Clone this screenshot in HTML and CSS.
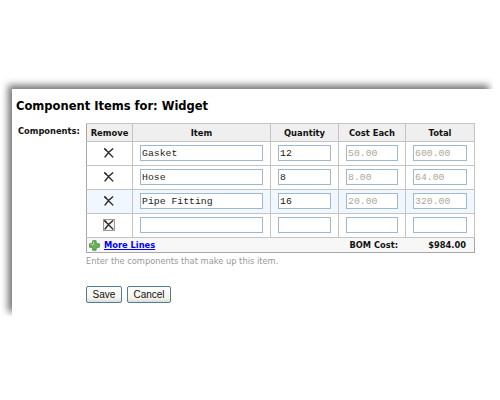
FILE: index.html
```html
<!DOCTYPE html>
<html lang="en">
<head>
<meta charset="utf-8">
<title>Component Items for: Widget</title>
<link rel="stylesheet" href="styles.css">
</head>
<body>
<svg class="defs" aria-hidden="true"><symbol id="cross" viewBox="0 0 12 12"><path d="M1.7 1.8 9.8 9.9M9.7 1.8C6.5 4 4 7 2 10" fill="none" stroke="#333" stroke-width="1.4" stroke-linecap="round"/><path d="M1.7 1.8 3.4 3.3" stroke="#333" stroke-width="1.6"/></symbol></svg>
<main class="panel">
  <h1>Component Items for: Widget</h1>
  <form class="form">
    <div class="label">Components:</div>
    <div class="field">
      <table class="items">
        <colgroup><col class="c-remove"><col class="c-item"><col class="c-num"><col class="c-cost"><col class="c-total"></colgroup>
        <thead><tr><th>Remove</th><th>Item</th><th>Quantity</th><th>Cost Each</th><th>Total</th></tr></thead>
        <tbody>
          <tr><td class="remove"><svg class="x"><use href="#cross"/></svg></td><td><input value="Gasket"></td><td><input value="12"></td><td><input value="50.00" disabled></td><td><input value="600.00" disabled></td></tr>
          <tr><td class="remove"><svg class="x"><use href="#cross"/></svg></td><td><input value="Hose"></td><td><input value="8"></td><td><input value="8.00" disabled></td><td><input value="64.00" disabled></td></tr>
          <tr class="active"><td class="remove"><svg class="x"><use href="#cross"/></svg></td><td><input value="Pipe Fitting"></td><td><input value="16"></td><td><input value="20.00" disabled></td><td><input value="320.00" disabled></td></tr>
          <tr><td class="remove"><svg class="x focused"><use href="#cross"/></svg></td><td><input></td><td><input></td><td><input disabled></td><td><input disabled></td></tr>
        </tbody>
      </table>
      <div class="summary">
        <svg class="plus" viewBox="0 0 11 11"><path d="M3.7.8h3.4v3h3.2v3.4H7.1v3H3.7v-3H.6V3.8h3.1z" fill="#72b45c" stroke="#4b8f45" stroke-linejoin="round"/><path d="M4.5 1.6v3H1.4" fill="none" stroke="#a5dc8b"/></svg>
        <a href="#">More Lines</a>
        <span class="cost">BOM Cost:</span>
        <span class="sum">$984.00</span>
      </div>
      <p class="hint">Enter the components that make up this item.</p>
      <div class="buttons"><button type="button" class="save">Save</button><button type="button" class="cancel">Cancel</button></div>
    </div>
  </form>
</main>
</body>
</html>
```
FILE: styles.css
```css
* { box-sizing: border-box; }
body {
  margin: 0;
  padding: 89px 0 0 12px;
  background: #fff;
  color: #111;
  font: 9px/12px "DejaVu Sans", sans-serif;
}
.defs { display: none; }
.panel {
  width: 481px;
  height: 227px;
  padding: 9px 0 0 4px;
  background: #fff;
  box-shadow: -4px -4px 7px #777;
  clip-path: inset(-12px 0 0 -12px);
}
h1 { margin: 0; color: #000; font-size: 11.5px; line-height: 16px; font-weight: bold; white-space: nowrap; }
.form { display: flex; margin-top: 9px; }
.label { width: 70px; padding: 2px 0 0 2px; font-size: 8.3px; font-weight: bold; }
.field { width: 389px; }
.items {
  width: 389px;
  table-layout: fixed;
  border-collapse: collapse;
  border: 1px solid #a8a8a8;
  border-bottom: 0;
}
.c-remove { width: 46px; }
.c-item { width: 138px; }
.c-num { width: 68px; }
.c-cost { width: 67px; }
.c-total { width: 69px; }
th, td { padding: 0; border: 1px solid #c4c4c4; }
th { height: 18px; background: #efefef; font-size: 8.4px; line-height: 12px; white-space: nowrap; }
td { height: 24px; padding: 0 7px 2px; line-height: 0; }
.items tr > :first-child { border-left-color: #a8a8a8; }
.active { background: #f1f7fe; }
td.remove { padding: 0 1px 2px 0; text-align: center; }
.x { width: 12px; height: 12px; }
.focused { background: #f2f2f2; outline: 1px solid #999; outline-offset: -1px; }
input {
  display: block;
  width: 100%;
  height: 16px;
  margin: 0;
  padding: 1px 0 0 1px;
  border: 1px solid #9db8d0;
  border-radius: 0;
  background: #fff;
  color: #222;
  font: 9.8px/13px "Liberation Mono", monospace;
}
input:disabled { color: #aca899; }
.summary {
  display: flex;
  align-items: center;
  height: 15px;
  padding: 0 8px 0 2px;
  border: 1px solid #a8a8a8;
  border-top: 0;
  background: #f7f7f7;
  font-size: 8.3px;
  font-weight: bold;
}
.plus { width: 11px; height: 11px; margin-right: 4px; }
a { color: #00f; }
.cost { margin-left: auto; }
.sum { width: 68px; text-align: right; }
.hint { margin: 2px 0 0; color: #999; font-size: 8.3px; }
.buttons { display: flex; gap: 5px; margin-top: 19px; }
button {
  height: 17px;
  padding: 0;
  border: 1px solid #527ba0;
  border-radius: 2px;
  background: linear-gradient(#fff, #f3f3ee 75%, #dfdcd0);
  color: #111;
  font: 10px/13px "Liberation Sans", sans-serif;
}
.save { width: 36px; }
.cancel { width: 44px; }
```
